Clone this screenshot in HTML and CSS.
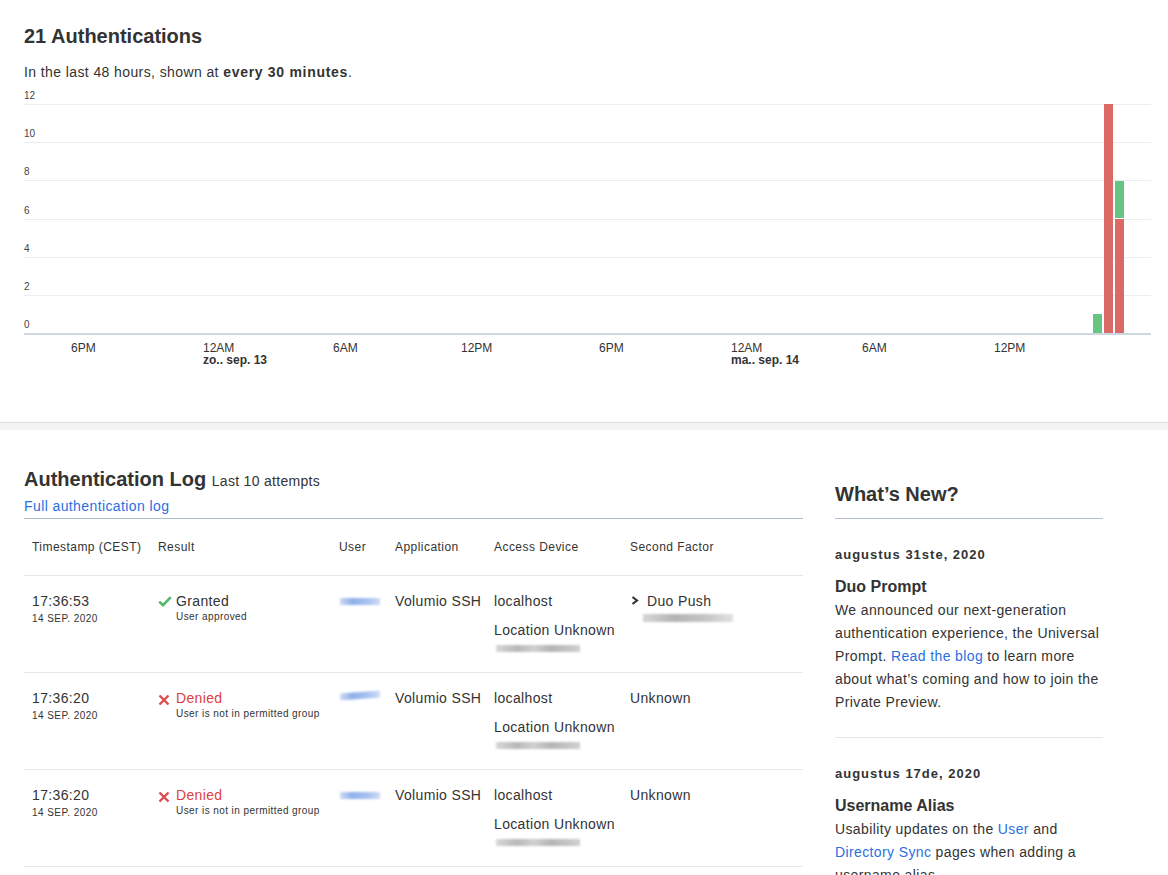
FILE: index.html
```html
<!DOCTYPE html>
<html lang="nl">
<head>
<meta charset="utf-8">
<title>Dashboard</title>
<link rel="stylesheet" href="styles.css">
</head>
<body>
<section class="summary">
  <h1 class="summary-title">21 Authentications</h1>
  <p class="summary-sub">In the last 48 hours, shown at <strong>every 30 minutes</strong>.</p>
  <svg class="chart" width="1127" height="290" viewBox="0 0 1127 290">
    <g class="grid">
      <rect x="0" y="18" width="1127" height="1"/>
      <rect x="0" y="56" width="1127" height="1"/>
      <rect x="0" y="94" width="1127" height="1"/>
      <rect x="0" y="133" width="1127" height="1"/>
      <rect x="0" y="171" width="1127" height="1"/>
      <rect x="0" y="209" width="1127" height="1"/>
    </g>
    <g class="ylab">
      <text x="0" y="13">12</text>
      <text x="0" y="51">10</text>
      <text x="0" y="89">8</text>
      <text x="0" y="128">6</text>
      <text x="0" y="166">4</text>
      <text x="0" y="204">2</text>
      <text x="0" y="242">0</text>
    </g>
    <rect class="bar-granted" x="1069" y="228" width="9" height="19"/>
    <rect class="bar-denied" x="1080" y="18" width="9" height="229"/>
    <rect class="bar-denied" x="1091" y="133" width="9" height="114"/>
    <rect class="bar-granted" x="1091" y="95" width="9" height="37"/>
    <rect class="axis" x="0" y="247" width="1127" height="2"/>
    <g class="xlab">
      <text x="47" y="266">6PM</text>
      <text x="179" y="266">12AM</text>
      <text x="309" y="266">6AM</text>
      <text x="437" y="266">12PM</text>
      <text x="575" y="266">6PM</text>
      <text x="707" y="266">12AM</text>
      <text x="838" y="266">6AM</text>
      <text x="970" y="266">12PM</text>
    </g>
    <g class="xdate">
      <text x="179" y="278">zo.. sep. 13</text>
      <text x="707" y="278">ma.. sep. 14</text>
    </g>
  </svg>
</section>

<div class="band"></div>

<div class="content">
  <section class="log">
    <header class="log-head">
      <h2 class="log-title">Authentication Log <span class="log-count">Last 10 attempts</span></h2>
      <a class="log-link" href="#">Full authentication log</a>
    </header>
    <table class="log-table">
      <colgroup>
        <col class="c-time"><col class="c-result"><col class="c-user"><col class="c-app"><col class="c-device"><col class="c-factor">
      </colgroup>
      <thead>
        <tr>
          <th>Timestamp (CEST)</th>
          <th>Result</th>
          <th>User</th>
          <th>Application</th>
          <th>Access Device</th>
          <th>Second Factor</th>
        </tr>
      </thead>
      <tbody>
        <tr>
          <td><div class="time">17:36:53</div><div class="date">14 SEP. 2020</div></td>
          <td>
            <div class="result">
              <svg class="ico ico-ok" width="14" height="11" viewBox="0 0 14 11"><path d="M1.2 5.6 L5 9.2 L12.8 1.2"/></svg>
              <div><div class="result-label ok">Granted</div><div class="result-reason">User approved</div></div>
            </div>
          </td>
          <td><div class="blur blur-user"></div></td>
          <td>Volumio SSH</td>
          <td><div>localhost</div><div class="loc">Location Unknown</div><div class="blur blur-ip"></div></td>
          <td><div class="factor"><svg class="chev" width="8" height="9" viewBox="0 0 8 9"><path d="M1.5 1 L6 4.5 L1.5 8"/></svg>Duo Push</div><div class="blur blur-dev"></div></td>
        </tr>
        <tr>
          <td><div class="time">17:36:20</div><div class="date">14 SEP. 2020</div></td>
          <td>
            <div class="result">
              <svg class="ico ico-no" width="12" height="12" viewBox="0 0 12 12"><path d="M1.5 1.5 L10.5 10.5 M10.5 1.5 L1.5 10.5"/></svg>
              <div><div class="result-label no">Denied</div><div class="result-reason">User is not in permitted group</div></div>
            </div>
          </td>
          <td><div class="blur blur-user blur-user-b"></div></td>
          <td>Volumio SSH</td>
          <td><div>localhost</div><div class="loc">Location Unknown</div><div class="blur blur-ip"></div></td>
          <td>Unknown</td>
        </tr>
        <tr>
          <td><div class="time">17:36:20</div><div class="date">14 SEP. 2020</div></td>
          <td>
            <div class="result">
              <svg class="ico ico-no" width="12" height="12" viewBox="0 0 12 12"><path d="M1.5 1.5 L10.5 10.5 M10.5 1.5 L1.5 10.5"/></svg>
              <div><div class="result-label no">Denied</div><div class="result-reason">User is not in permitted group</div></div>
            </div>
          </td>
          <td><div class="blur blur-user"></div></td>
          <td>Volumio SSH</td>
          <td><div>localhost</div><div class="loc">Location Unknown</div><div class="blur blur-ip"></div></td>
          <td>Unknown</td>
        </tr>
      </tbody>
    </table>
  </section>

  <aside class="news">
    <h2 class="news-title">What’s New?</h2>
    <article class="news-item">
      <div class="news-date">augustus 31ste, 2020</div>
      <h3 class="news-head">Duo Prompt</h3>
      <p class="news-text">We announced our next-generation authentication experience, the Universal Prompt. <a href="#">Read the blog</a> to learn more about what’s coming and how to join the Private Preview.</p>
    </article>
    <article class="news-item">
      <div class="news-date">augustus 17de, 2020</div>
      <h3 class="news-head">Username Alias</h3>
      <p class="news-text">Usability updates on the <a href="#">User</a> and <a href="#">Directory Sync</a> pages when adding a username alias.</p>
    </article>
  </aside>
</div>
</body>
</html>
```

FILE: styles.css
```css
* { box-sizing: border-box; }

html, body {
  margin: 0;
  background: #fff;
}

body {
  font-family: "Liberation Sans", Arial, sans-serif;
  font-size: 14px;
  color: #333;
  letter-spacing: .35px;
}

a {
  color: #2a6fdf;
  text-decoration: none;
}

/* ---------- summary / chart ---------- */
.summary {
  padding: 24px 0 46px 24px;
}

.summary-title {
  margin: 0;
  font-size: 20px;
  line-height: 24px;
  font-weight: bold;
  letter-spacing: 0;
}

.summary-sub {
  margin: 14px 0 0;
  line-height: 20px;
  letter-spacing: .4px;
}

.summary-sub strong {
  letter-spacing: .7px;
}

.chart {
  display: block;
  margin-top: 4px;
  overflow: visible;
}

.chart .grid { fill: #e9eef3; }
.chart .axis { fill: #cdd7e1; }
.chart .bar-denied { fill: #db6a67; }
.chart .bar-granted { fill: #67c584; }

.chart .ylab {
  font-size: 10px;
  fill: #444;
  letter-spacing: 0;
}

.chart .xlab {
  font-size: 12px;
  fill: #333;
  letter-spacing: 0;
}

.chart .xdate {
  font-size: 12px;
  font-weight: bold;
  fill: #333;
  letter-spacing: 0;
}

.band {
  height: 8px;
  border-top: 1px solid #dcdcdc;
  background: #f4f4f4;
}

/* ---------- content ---------- */
.content {
  display: flex;
  gap: 32px;
  padding: 0 65px 0 24px;
}

.log {
  flex: 0 0 779px;
  padding-top: 37px;
}

.log-head {
  padding-bottom: 2px;
  border-bottom: 1px solid #b0bdcc;
}

.log-title {
  margin: 0;
  font-size: 20px;
  line-height: 24px;
  font-weight: bold;
  letter-spacing: 0;
}

.log-count {
  font-size: 14px;
  font-weight: normal;
  letter-spacing: .3px;
}

.log-link {
  display: block;
  margin-top: 3px;
  line-height: 20px;
  letter-spacing: .4px;
}

.log-table {
  width: 779px;
  border-collapse: collapse;
  table-layout: fixed;
}

.c-time { width: 126px; }
.c-result { width: 181px; }
.c-user { width: 56px; }
.c-app { width: 99px; }
.c-device { width: 136px; }
.c-factor { width: 181px; }

.log-table th {
  text-align: left;
  font-weight: normal;
  font-size: 12px;
  line-height: 14px;
  letter-spacing: .45px;
  padding: 21px 8px;
  border-bottom: 1px solid #e3e7ec;
  white-space: nowrap;
}

.log-table td {
  vertical-align: top;
  padding: 15px 8px 20px;
  line-height: 20px;
  border-bottom: 1px solid #e6e9ee;
  white-space: nowrap;
}

.date {
  margin-top: 2px;
  font-size: 10px;
  line-height: 12px;
  letter-spacing: .45px;
}

.result {
  display: flex;
  align-items: flex-start;
}

.ico {
  flex: 0 0 auto;
  margin-top: 5px;
  margin-right: 4px;
  fill: none;
}

.ico-ok {
  stroke: #56b86a;
  stroke-width: 2.6;
}

.ico-no {
  margin-top: 6px;
  margin-right: 6px;
  stroke: #de4b4b;
  stroke-width: 2.4;
}

.result-label.ok { color: #333; }
.result-label.no { color: #dd3f3f; }

.result-reason {
  font-size: 10px;
  line-height: 12px;
  letter-spacing: .42px;
}

.blur {
  filter: blur(1.2px);
}

.blur-user {
  width: 40px;
  height: 7px;
  margin-top: 7px;
  margin-left: 1px;
  background: linear-gradient(90deg, #cfdcf4, #8fb0ea 30%, #a9c3f0 70%, #cfdcf4);
}

.blur-user-b {
  margin-top: 4px;
  transform: skewY(-4deg);
}

.blur-ip {
  width: 84px;
  height: 7px;
  margin-top: 5px;
  margin-left: 2px;
  background: linear-gradient(90deg, #d8d8d8, #b8b8b8 25%, #d0d0d0 45%, #b5b5b5 65%, #d0d0d0);
}

.loc {
  margin-top: 9px;
}

.factor {
  display: flex;
  align-items: flex-start;
}

.chev {
  flex: 0 0 auto;
  margin: 5px 8px 0 1px;
  fill: none;
  stroke: #333;
  stroke-width: 2.2;
}

.blur-dev {
  width: 90px;
  height: 8px;
  margin-top: 3px;
  margin-left: 13px;
  background: linear-gradient(90deg, #d6d6d6, #b4b4b4 35%, #c6c6c6 70%, #e2e2e2);
}

/* ---------- news ---------- */
.news {
  flex: 0 0 268px;
  padding-top: 52px;
}

.news-title {
  margin: 0;
  padding-bottom: 12px;
  font-size: 20px;
  line-height: 24px;
  font-weight: bold;
  letter-spacing: 0;
  border-bottom: 1px solid #b3bfcd;
}

.news-item {
  padding: 28px 0 23px;
  border-bottom: 1px solid #e6e6e6;
}

.news-date {
  font-size: 13px;
  font-weight: bold;
  line-height: 16px;
  letter-spacing: 1px;
}

.news-head {
  margin: 14px 0 0;
  font-size: 16px;
  line-height: 20px;
  font-weight: bold;
  letter-spacing: 0;
}

.news-text {
  margin: 2px 0 0;
  line-height: 23px;
  letter-spacing: .38px;
}
```
